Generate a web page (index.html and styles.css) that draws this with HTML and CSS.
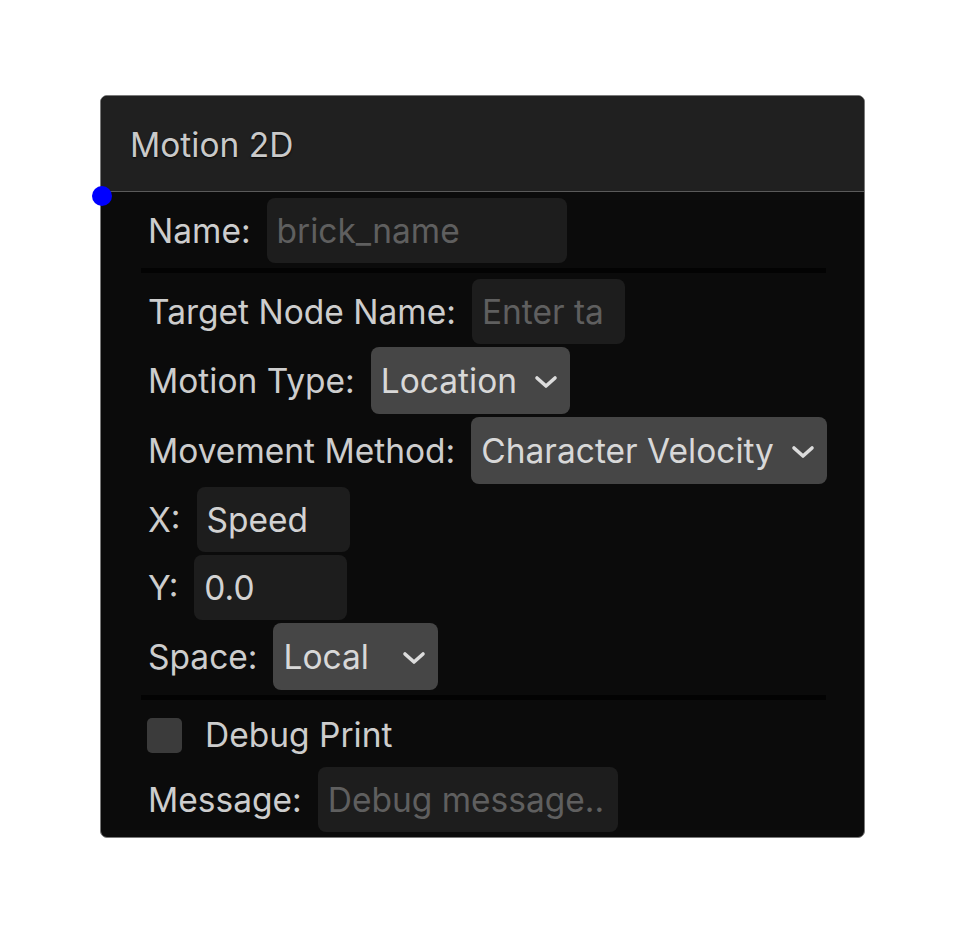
FILE: index.html
```html
<!DOCTYPE html>
<html lang="en">
<head>
<meta charset="utf-8">
<title>Motion 2D</title>
<link rel="stylesheet" href="styles.css">
</head>
<body>
<div class="node">
  <span class="port"></span>
  <div class="node-header">Motion 2D</div>
  <div class="node-body">
    <div class="row">
      <span class="label">Name:</span>
      <span class="field wide placeholder">brick_name</span>
    </div>
    <div class="sep"></div>
    <div class="row">
      <span class="label">Target Node Name:</span>
      <span class="field narrow placeholder">Enter ta</span>
    </div>
    <div class="row">
      <span class="label">Motion Type:</span>
      <span class="select">Location<svg class="chev" viewBox="0 0 24 16"><polyline points="3,4 12,12 21,4"/></svg></span>
    </div>
    <div class="row">
      <span class="label">Movement Method:</span>
      <span class="select">Character Velocity<svg class="chev" viewBox="0 0 24 16"><polyline points="3,4 12,12 21,4"/></svg></span>
    </div>
    <div class="row">
      <span class="label">X:</span>
      <span class="field narrow">Speed</span>
    </div>
    <div class="row">
      <span class="label">Y:</span>
      <span class="field narrow">0.0</span>
    </div>
    <div class="row">
      <span class="label">Space:</span>
      <span class="select space">Local<svg class="chev" viewBox="0 0 24 16"><polyline points="3,4 12,12 21,4"/></svg></span>
    </div>
    <div class="sep"></div>
    <div class="row check-row">
      <span class="checkbox"></span>
      <span class="label">Debug Print</span>
    </div>
    <div class="row">
      <span class="label">Message:</span>
      <span class="field wide placeholder">Debug message..</span>
    </div>
  </div>
</div>
</body>
</html>
```

FILE: styles.css
```css
html, body {
  margin: 0;
  background: #ffffff;
}

body {
  padding: 95px 0 0 100px;
  font-family: Inter, "Noto Sans", sans-serif;
  font-size: 33.5px;
}

.node {
  position: relative;
  width: 765px;
  box-sizing: border-box;
  border: 1px solid #7a7a7a;
  border-radius: 7px;
  background: #0b0b0b;
}

/* connection port sitting on the header edge */
.port {
  position: absolute;
  left: -9px;
  top: 90px;
  width: 20px;
  height: 20px;
  border-radius: 50%;
  background: #0000ff;
  z-index: 2;
}

.node-header {
  box-sizing: border-box;
  height: 96px;
  display: flex;
  align-items: center;
  padding: 3px 0 0 29px;
  background: #202020;
  border-bottom: 1px solid #5a5a5a;
  border-radius: 6px 6px 0 0;
  color: #c9c9c9;
  text-shadow: 0 1px 2px rgba(0, 0, 0, 0.9);
}

.node-body {
  display: flex;
  flex-direction: column;
  gap: 3px;
  padding: 6px 38px 5px 40px;
}

.row {
  display: flex;
  align-items: center;
  gap: 16px;
  padding-left: 7px;
}

.label {
  color: #cdcdcd;
  white-space: nowrap;
}

.field {
  box-sizing: border-box;
  height: 65px;
  display: flex;
  align-items: center;
  padding: 0 10px;
  border-radius: 8px;
  background: #1d1d1d;
  color: #d2d2d2;
  white-space: nowrap;
  overflow: hidden;
}

.field.wide { width: 300px; }
.field.narrow { width: 153px; }
.field.placeholder { color: #5f5f5f; }

.select {
  box-sizing: border-box;
  height: 67px;
  display: flex;
  align-items: center;
  gap: 17px;
  padding: 0 12px 0 10px;
  border-radius: 8px;
  background: #464646;
  color: #d8d8d8;
  white-space: nowrap;
}

.select.space {
  width: 165px;
  justify-content: space-between;
}

.chev {
  width: 24px;
  height: 16px;
  margin-top: 2px;
  fill: none;
  stroke: #dcdcdc;
  stroke-width: 3.6;
  stroke-linecap: round;
  stroke-linejoin: round;
}

.sep {
  height: 5px;
  background: #030303;
  margin: 2px 0 3px;
}

.check-row {
  height: 58px;
  gap: 23px;
  padding-left: 6px;
}

.checkbox {
  width: 35px;
  height: 35px;
  border-radius: 5px;
  background: #3b3b3b;
}
```
